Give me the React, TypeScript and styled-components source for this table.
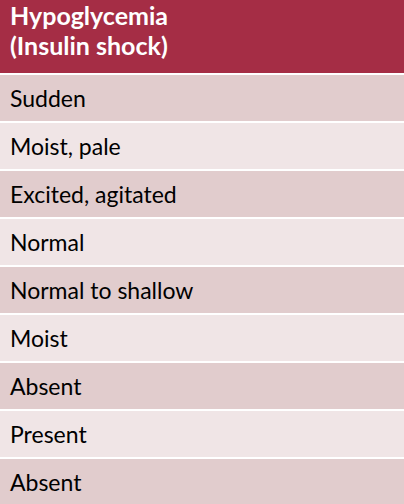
import styled, { createGlobalStyle } from 'styled-components';

const GlobalStyle = createGlobalStyle`
  body {
    margin: 0;
    background: #ffffff;
  }
`;

const Table = styled.div`
  width: 404px;
  display: flex;
  flex-direction: column;
  gap: 2px;
  font-family: Lato, "Open Sans", sans-serif;
`;

const Header = styled.div`
  height: 73px;
  padding: 0 10px;
  box-sizing: border-box;
  background: #a52d45;
  color: #ffffff;
  font-size: 25px;
  font-weight: 700;
  line-height: 30px;
`;

const Row = styled.div<{ $shade: boolean }>`
  height: 46px;
  display: flex;
  align-items: center;
  padding: 0 10px;
  box-sizing: border-box;
  background: ${p => (p.$shade ? '#e1cccd' : '#f0e5e6')};
  color: #000000;
  font-size: 23px;
`;

const rows = [
  'Sudden',
  'Moist, pale',
  'Excited, agitated',
  'Normal',
  'Normal to shallow',
  'Moist',
  'Absent',
  'Present',
  'Absent',
];

const App = () => {
  return (
    <>
      <GlobalStyle />
      <Table>
        <Header>
          Hypoglycemia
          <br />
          (Insulin shock)
        </Header>
        {rows.map((text, i) => (
          <Row key={i} $shade={i % 2 === 0}>
            {text}
          </Row>
        ))}
      </Table>
    </>
  );
};

export default App;
